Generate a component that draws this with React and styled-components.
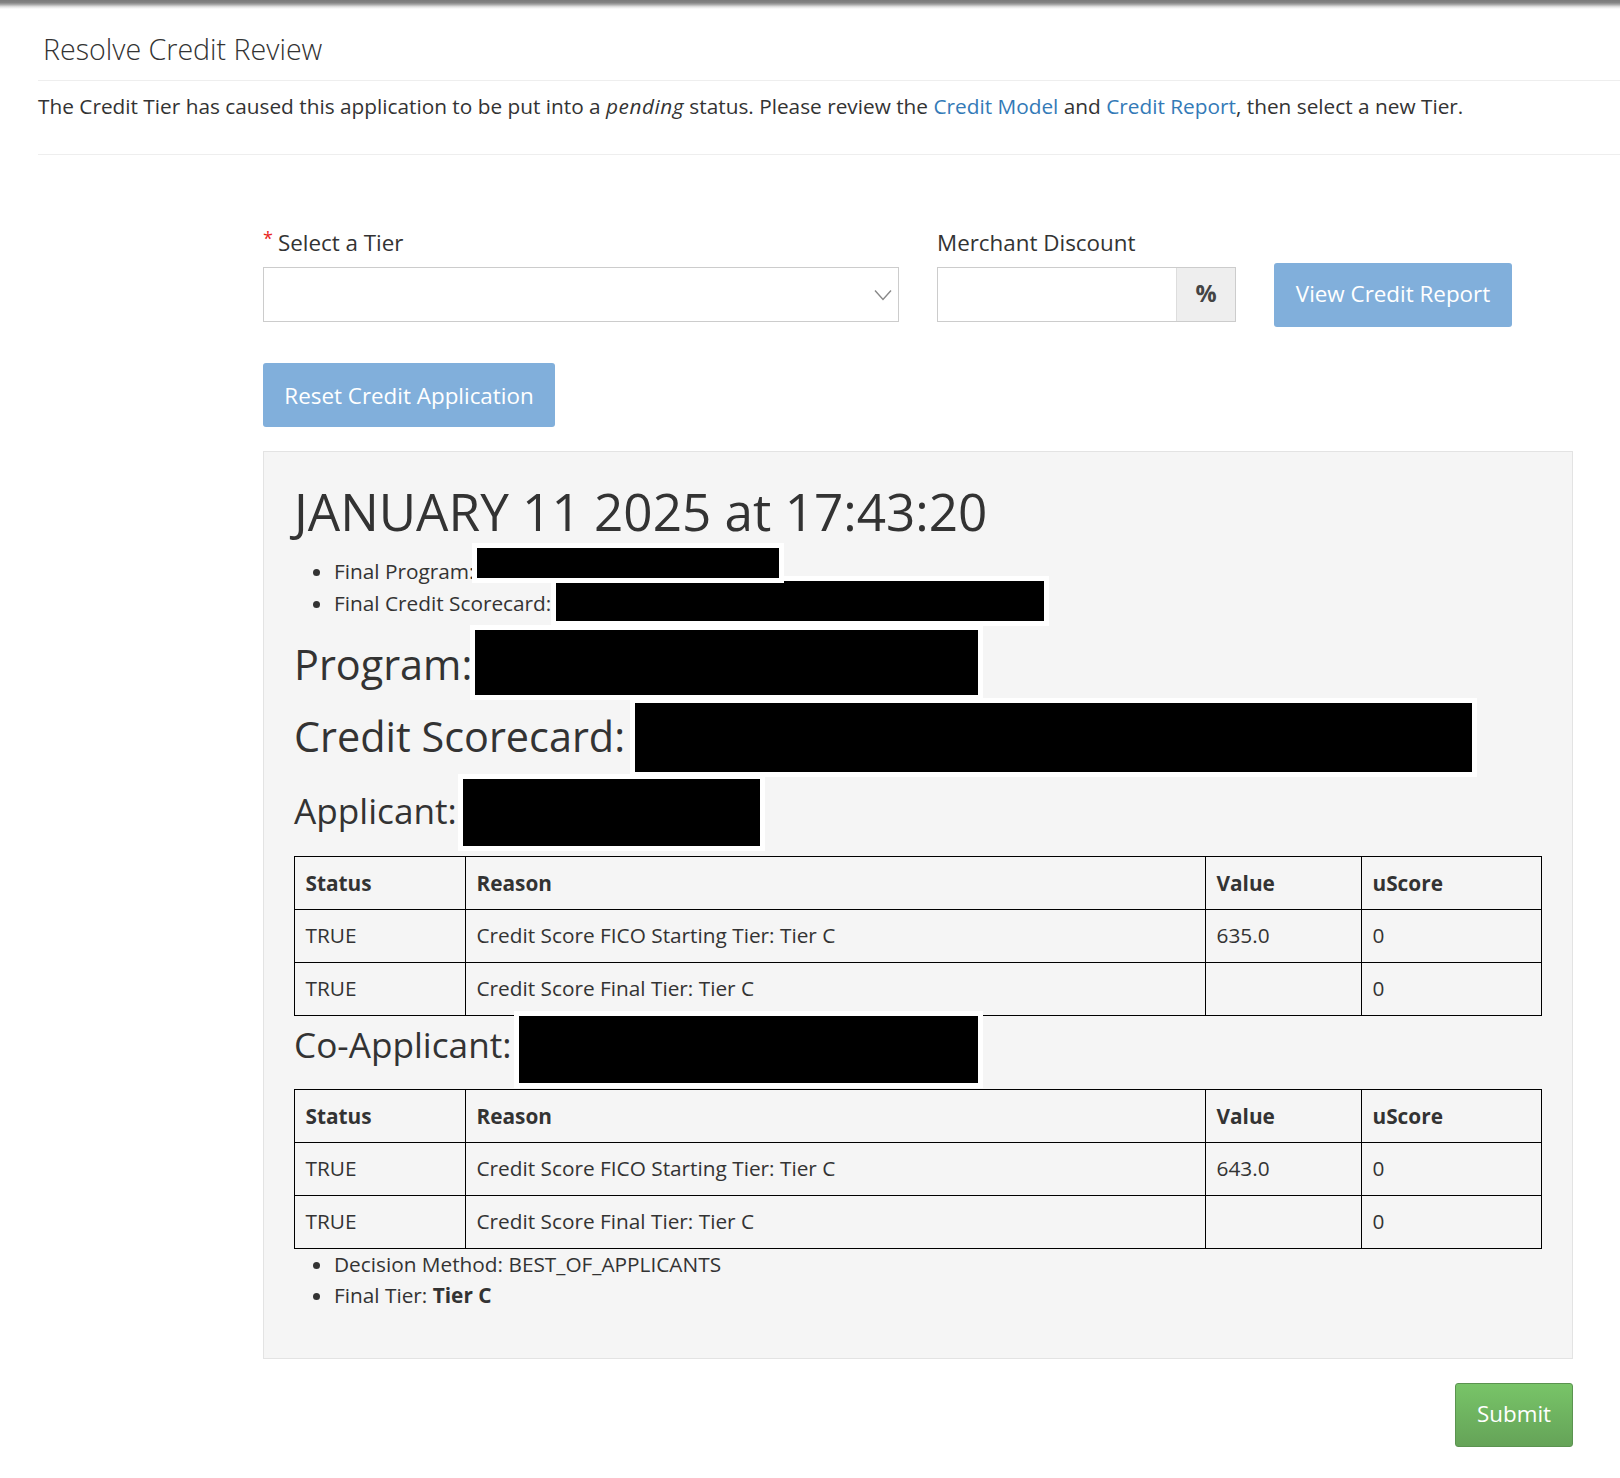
import React from 'react';
import styled, { createGlobalStyle } from 'styled-components';

const GlobalStyle = createGlobalStyle`
  html, body {
    margin: 0;
    padding: 0;
    background: #fff;
  }
  body {
    font-family: "Open Sans", "Liberation Sans", sans-serif;
    font-size: 20.8px;
    line-height: 31px;
    color: #333;
  }
`;

const Page = styled.div`
  position: relative;
  width: 1620px;
  height: 1478px;
  padding: 0 0 0 38px;
  box-sizing: border-box;
  overflow: hidden;
`;

const TopShadow = styled.div`
  height: 9px;
  margin-left: -38px;
  background: linear-gradient(#7a7a7a 0, #858585 30%, #a8a8a8 50%, #e2e2e2 75%, #fff 100%);
`;

const Header = styled.div`
  height: 72px;
  box-sizing: border-box;
  padding: 27px 0 0 5px;
  border-bottom: 1px solid #eee;
`;

const Title = styled.h4`
  margin: 0;
  font-size: 28.6px;
  line-height: 26px;
  font-weight: 300;
`;

const Intro = styled.p`
  margin: 0;
  height: 74px;
  box-sizing: border-box;
  padding-top: 10px;
  border-bottom: 1px solid #eee;
  em {
    letter-spacing: 0.5px;
  }
  a {
    color: #337ab7;
    text-decoration: none;
  }
`;

const Form = styled.div`
  margin: 0 47px 0 225px;
  padding-top: 72px;
  font-size: 22.4px;
`;

const FieldRow = styled.div`
  display: flex;
  align-items: flex-start;
  gap: 38px;
`;

const Field = styled.div`
  width: ${(p) => p.$width}px;
  flex: none;
`;

const Label = styled.label`
  display: block;
  height: 40px;
  line-height: 32px;
  white-space: nowrap;
`;

const Required = styled.sup`
  color: #e8261c;
  font-size: 18px;
  line-height: 0;
  margin-right: 5px;
  vertical-align: 6px;
`;

const SelectBox = styled.div`
  height: 55px;
  box-sizing: border-box;
  border: 1px solid #ccc;
  background: #fff;
  display: flex;
  align-items: center;
  justify-content: flex-end;
  padding-right: 5px;
`;

const InputGroup = styled.div`
  display: flex;
  height: 55px;
  box-sizing: border-box;
  border: 1px solid #ccc;
`;

const InputBlank = styled.div`
  flex: 1;
  background: #fff;
`;

const Addon = styled.span`
  width: 58px;
  border-left: 1px solid #ddd;
  background: #eee;
  font-size: 23.5px;
  font-weight: 700;
  text-align: center;
  line-height: 51px;
  color: #444;
`;

const Button = styled.button`
  display: block;
  height: 64px;
  padding: 0 0 3px;
  border: 0;
  border-radius: 3px;
  background: #81afdb;
  color: #fff;
  font: inherit;
  white-space: nowrap;
`;

const ViewButton = styled(Button)`
  margin-top: 36px;
  width: 238px;
`;

const ResetButton = styled(Button)`
  margin-top: 36px;
  width: 292px;
  padding-bottom: 0;
`;

const Well = styled.div`
  margin-top: 24px;
  height: 908px;
  box-sizing: border-box;
  padding: 18px 30px 0;
  background: #f5f5f5;
  border: 1px solid #e3e3e3;
  font-size: 20.8px;
`;

const Heading = styled.h1`
  margin: 0;
  height: 86px;
  font-size: 51.25px;
  line-height: 82px;
  font-weight: 400;
`;

const List = styled.ul`
  margin: 0 0 ${(p) => p.$bottom || 0}px;
  padding-left: 40px;
  li {
    height: ${(p) => p.$row}px;
    white-space: nowrap;
  }
`;

const Redacted = styled.span`
  position: relative;
  z-index: ${(p) => p.$z || 0};
  display: inline-block;
  box-sizing: content-box;
  flex: none;
  width: ${(p) => p.$w}px;
  height: ${(p) => p.$h}px;
  background: #000;
  border: 5px solid #fff;
  margin: -10px 0 -10px ${(p) => p.$gap || 0}px;
  vertical-align: middle;
  transform: translateY(${(p) => p.$y || 0}px);
`;

const SubRow = styled.div`
  display: flex;
  align-items: center;
  height: ${(p) => p.$height}px;
  margin-bottom: ${(p) => p.$bottom || 0}px;
  font-size: ${(p) => p.$size}px;
  white-space: nowrap;
`;

// margin moves the text only, the row height stays put
const RowLabel = styled.span`
  margin-top: ${(p) => (p.$shift || 0) * 2}px;
`;

const ScoreTable = styled.table`
  width: 1247px;
  margin-top: ${(p) => p.$top || 0}px;
  border-collapse: collapse;
  table-layout: fixed;
  th, td {
    height: 53px;
    box-sizing: border-box;
    padding: 0 10.5px;
    border: 1px solid #000;
    text-align: left;
    vertical-align: middle;
  }
  td {
    padding-bottom: 2px;
  }
  th {
    font-weight: 700;
  }
`;

const Footer = styled.div`
  display: flex;
  justify-content: flex-end;
  margin-top: 24px;
`;

const SubmitButton = styled(Button)`
  width: 118px;
  background: linear-gradient(#78c468, #65a358);
  border: 1px solid #5b9350;
`;

const Chevron = () => (
  <svg width="20" height="12" viewBox="0 0 20 12" fill="none">
    <path d="M2 1.5 10 10.5 18 1.5" stroke="#888" strokeWidth="1.4" />
  </svg>
);

const Scores = ({ rows, top }) => (
  <ScoreTable $top={top}>
    <colgroup>
      <col style={{ width: 171 }} />
      <col style={{ width: 740 }} />
      <col style={{ width: 156 }} />
      <col style={{ width: 180 }} />
    </colgroup>
    <thead>
      <tr>
        <th>Status</th>
        <th>Reason</th>
        <th>Value</th>
        <th>uScore</th>
      </tr>
    </thead>
    <tbody>
      {rows.map((r) => (
        <tr key={r.reason}>
          <td>TRUE</td>
          <td>{r.reason}</td>
          <td>{r.value}</td>
          <td>0</td>
        </tr>
      ))}
    </tbody>
  </ScoreTable>
);

export default function App() {
  return (
    <>
      <GlobalStyle />
      <Page>
        <TopShadow />
        <Header>
          <Title>Resolve Credit Review</Title>
        </Header>
        <Intro>
          The Credit Tier has caused this application to be put into a <em>pending</em> status. Please review the{' '}
          <a href="#model">Credit Model</a> and <a href="#report">Credit Report</a>, then select a new Tier.
        </Intro>
        <Form>
          <FieldRow>
            <Field $width={636}>
              <Label>
                <Required>*</Required>Select a Tier
              </Label>
              <SelectBox>
                <Chevron />
              </SelectBox>
            </Field>
            <Field $width={299}>
              <Label>Merchant Discount</Label>
              <InputGroup>
                <InputBlank />
                <Addon>%</Addon>
              </InputGroup>
            </Field>
            <ViewButton>View Credit Report</ViewButton>
          </FieldRow>
          <ResetButton>Reset Credit Application</ResetButton>
          <Well>
            <Heading>JANUARY 11 2025 at 17:43:20</Heading>
            <List $row={32} $bottom={5}>
              <li>
                Final Program:
                <Redacted $w={302} $h={30} $gap={-3} $y={-10} $z={1} />
              </li>
              <li>
                Final Credit Scorecard:
                <Redacted $w={488} $h={40} $y={-4} />
              </li>
            </List>
            <SubRow $size={41.4} $height={75}>
              <RowLabel $shift={2}>Program:</RowLabel>
              <Redacted $w={503} $h={65} $gap={-2} />
            </SubRow>
            <SubRow $size={41.4} $height={75}>
              <RowLabel $shift={-1}>Credit Scorecard:</RowLabel>
              <Redacted $w={837} $h={69} $gap={5} />
            </SubRow>
            <SubRow $size={35.2} $height={74}>
              <RowLabel $shift={-2}>Applicant:</RowLabel>
              <Redacted $w={297} $h={67} $gap={1} />
            </SubRow>
            <Scores
              top={7}
              rows={[
                { reason: 'Credit Score FICO Starting Tier: Tier C', value: '635.0' },
                { reason: 'Credit Score Final Tier: Tier C', value: '' },
              ]}
            />
            <SubRow $size={35.2} $height={56} $bottom={17}>
              <RowLabel>Co-Applicant:</RowLabel>
              <Redacted $w={459} $h={67} $gap={2} $y={5} />
            </SubRow>
            <Scores
              rows={[
                { reason: 'Credit Score FICO Starting Tier: Tier C', value: '643.0' },
                { reason: 'Credit Score Final Tier: Tier C', value: '' },
              ]}
            />
            <List $row={31}>
              <li>Decision Method: BEST_OF_APPLICANTS</li>
              <li>
                Final Tier: <strong>Tier C</strong>
              </li>
            </List>
          </Well>
          <Footer>
            <SubmitButton>Submit</SubmitButton>
          </Footer>
        </Form>
      </Page>
    </>
  );
}
